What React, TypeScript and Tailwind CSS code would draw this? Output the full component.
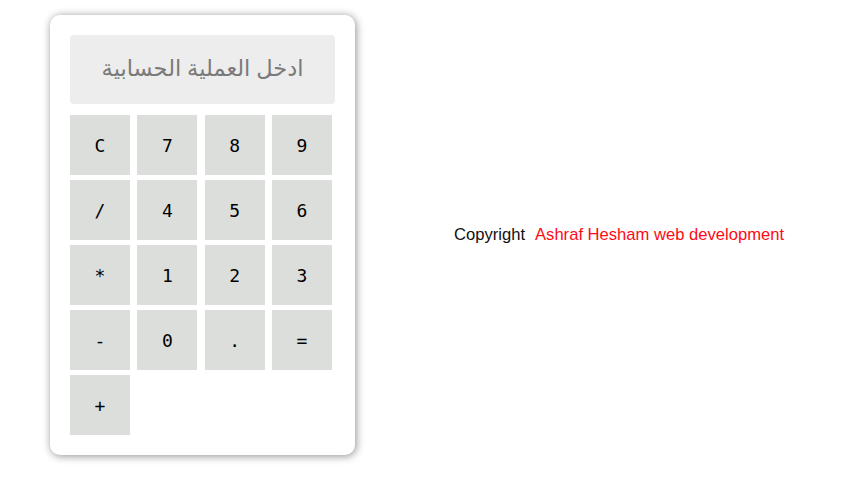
export default function App() {
  const keys = ["C", "7", "8", "9", "/", "4", "5", "6", "*", "1", "2", "3", "-", "0", ".", "=", "+"];
  return (
    <div className="flex items-center w-[842px] h-[481px] bg-white pl-[50px] pb-[11px]" style={{ fontFamily: '"Noto Sans", sans-serif' }}>
      <div className="w-[305px] h-[440px] bg-white rounded-[10px] shadow-[1px_1px_8px_rgba(0,0,0,0.45)] p-[20px] flex flex-col gap-[11px]">
        <div className="w-[265px] h-[69px] bg-[#ededed] rounded-[4px] flex items-center justify-center pb-[3px] text-[22.5px] text-[#7a7a7a]" dir="rtl" style={{ fontFamily: '"Noto Sans", "DejaVu Sans", sans-serif' }}>
          ادخل العملية الحسابية
        </div>
        <div className="grid grid-cols-[60px_60px_60px_60px] gap-x-[7.33px] gap-y-[5px]">
          {keys.map((k) => (
            <div key={k} className="w-[60px] h-[60px] bg-[#dcdedc] flex items-center justify-center text-[18px] text-black" style={{ fontFamily: '"DejaVu Sans Mono", monospace' }}>
              {k}
            </div>
          ))}
        </div>
      </div>
      <div className="ml-[99px] flex items-center text-[16.6px] leading-none" style={{ fontFamily: '"Liberation Sans", sans-serif' }}>
        <span className="text-[#111]">Copyright</span>
        <span className="ml-[10px] text-[#ff0a14]">Ashraf Hesham web development</span>
      </div>
    </div>
  );
}
